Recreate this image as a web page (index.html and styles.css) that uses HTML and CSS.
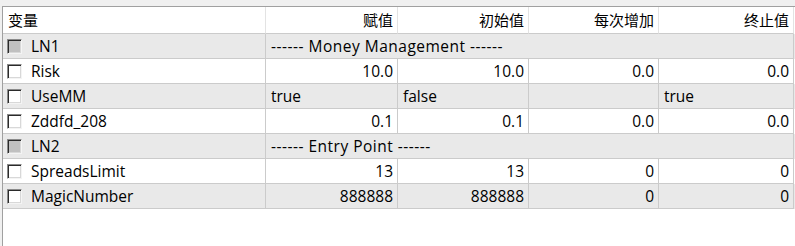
FILE: index.html
```html
<!DOCTYPE html>
<html>
<head>
<meta charset="utf-8">
<link rel="stylesheet" href="styles.css">
</head>
<body>
<div class="panel">
  <div class="grid">
    <div class="row head">
      <div class="cell">变量</div>
      <div class="cell num">赋值</div>
      <div class="cell num">初始值</div>
      <div class="cell num">每次增加</div>
      <div class="cell num">终止值</div>
    </div>
    <div class="row alt">
      <div class="cell name"><span class="cb cb-dis"></span>LN1</div>
      <div class="cell span">------ Money Management ------</div>
    </div>
    <div class="row">
      <div class="cell name"><span class="cb"></span>Risk</div>
      <div class="cell num">10.0</div>
      <div class="cell num">10.0</div>
      <div class="cell num">0.0</div>
      <div class="cell num">0.0</div>
    </div>
    <div class="row alt">
      <div class="cell name"><span class="cb"></span>UseMM</div>
      <div class="cell">true</div>
      <div class="cell">false</div>
      <div class="cell"></div>
      <div class="cell">true</div>
    </div>
    <div class="row">
      <div class="cell name"><span class="cb"></span>Zddfd_208</div>
      <div class="cell num">0.1</div>
      <div class="cell num">0.1</div>
      <div class="cell num">0.0</div>
      <div class="cell num">0.0</div>
    </div>
    <div class="row alt">
      <div class="cell name"><span class="cb cb-dis"></span>LN2</div>
      <div class="cell span">------ Entry Point ------</div>
    </div>
    <div class="row">
      <div class="cell name"><span class="cb"></span>SpreadsLimit</div>
      <div class="cell num">13</div>
      <div class="cell num">13</div>
      <div class="cell num">0</div>
      <div class="cell num">0</div>
    </div>
    <div class="row alt">
      <div class="cell name"><span class="cb"></span>MagicNumber</div>
      <div class="cell num">888888</div>
      <div class="cell num">888888</div>
      <div class="cell num">0</div>
      <div class="cell num">0</div>
    </div>
  </div>
</div>
</body>
</html>
```
FILE: styles.css
```css
html, body {
  margin: 0;
  padding: 0;
  background: #f0f0f0;
  height: 246px;
  overflow: hidden;
}
body {
  font-family: "Open Sans", "Noto Sans CJK SC", sans-serif;
  font-size: 15.5px;
  color: #000;
}
.panel {
  margin: 6px 0 0 2px;
  height: 240px;
  background: #fff;
  border-top: 1px solid #a0a0a0;
  border-left: 1px solid #a0a0a0;
  box-sizing: border-box;
}
.grid {
  display: flex;
  flex-direction: column;
}
.row {
  display: grid;
  grid-template-columns: 263px 132px 131px 130px 135px;
  height: 25px;
}
.row.head {
  height: 27px;
}
.row.alt {
  background: #e9e9e9;
}
.cell {
  box-sizing: border-box;
  border-right: 1px solid #cbcbcb;
  border-bottom: 1px solid #cbcbcb;
  padding: 0 4px 0 5px;
  display: flex;
  align-items: center;
  white-space: nowrap;
  overflow: hidden;
  line-height: 24px;
}
.head .cell {
  border-right-color: #e3e3e3;
  border-bottom-color: #cbcbcb;
  font-family: "Noto Sans CJK SC", sans-serif;
  font-size: 15px;
}
.num {
  justify-content: flex-end;
}
.span {
  grid-column: 2 / 6;
  letter-spacing: 0.5px;
}
.name {
  padding-left: 4px;
}
.cb {
  width: 15px;
  height: 15px;
  box-sizing: border-box;
  margin-right: 9px;
  background: #fff;
  border-top: 1px solid #8a8a8a;
  border-left: 1px solid #8a8a8a;
  border-right: 1px solid #f4f4f4;
  border-bottom: 1px solid #f4f4f4;
  box-shadow: inset 1px 1px 0 #2a2a2a, inset -1px -1px 0 #d8d8d8;
  flex: none;
}
.cb-dis {
  background: #c0c0c0;
}
```
